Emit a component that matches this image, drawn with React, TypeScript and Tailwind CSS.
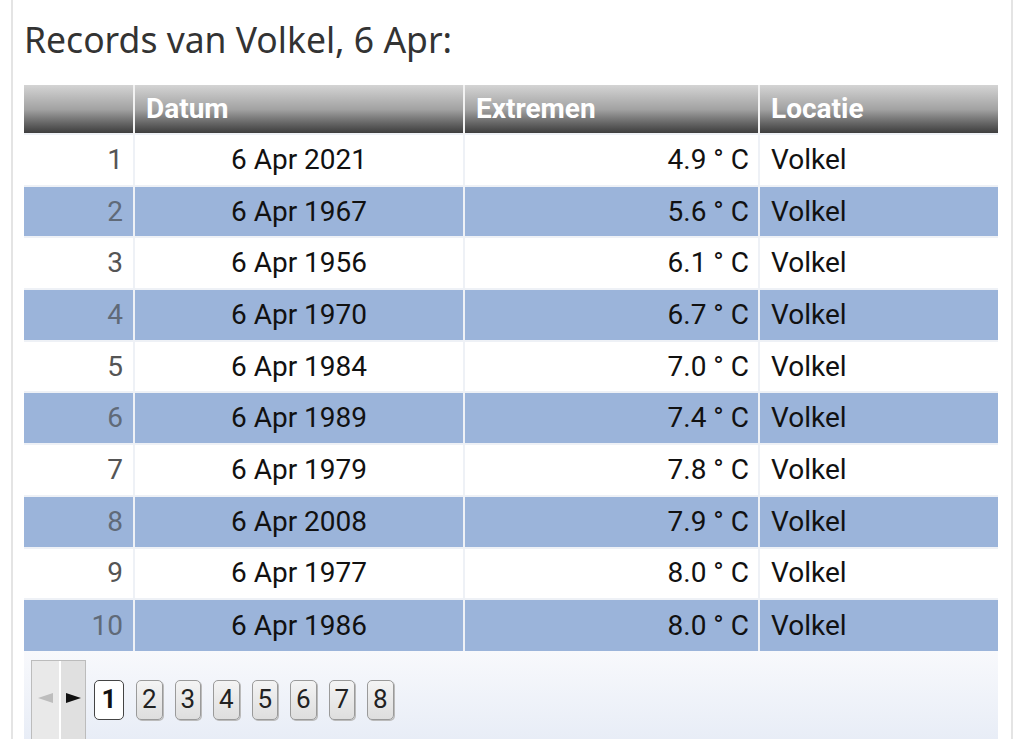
const rows = [
  ['6 Apr 2021', '4.9'],
  ['6 Apr 1967', '5.6'],
  ['6 Apr 1956', '6.1'],
  ['6 Apr 1970', '6.7'],
  ['6 Apr 1984', '7.0'],
  ['6 Apr 1989', '7.4'],
  ['6 Apr 1979', '7.8'],
  ['6 Apr 2008', '7.9'],
  ['6 Apr 1977', '8.0'],
  ['6 Apr 1986', '8.0'],
]

export default function App() {
  return (
    <div className="h-[739px] overflow-hidden bg-white">
      <div className="mx-[11px] h-full border-x-2 border-[#e4e4e4] pl-[11px] pr-[13px]">
        {/* titel */}
        <h1 className="pt-[14px] pb-[21px] font-['Noto_Sans','Open_Sans',sans-serif] text-[35.5px] leading-[50px] text-[#333]">
          Records van Volkel, 6 Apr:
        </h1>

        <table className="w-full table-fixed border-collapse font-['Roboto',sans-serif] text-[28px]">
          <colgroup>
            <col className="w-[110px]" />
            <col className="w-[330px]" />
            <col className="w-[295px]" />
            <col />
          </colgroup>
          <thead>
            <tr className="h-[49px] bg-linear-to-b from-[#d4d4d4] via-[#a2a2a2] to-[#3a3a3a] text-left font-bold text-white">
              <th className="border-r-2 border-[#f2f2f2]"></th>
              <th className="border-r-2 border-[#f2f2f2] pl-[11px] font-bold">Datum</th>
              <th className="border-r-2 border-[#f2f2f2] pl-[11px] font-bold">Extremen</th>
              <th className="pl-[11px] font-bold">Locatie</th>
            </tr>
          </thead>
          <tbody>
            {rows.map(([date, val], i) => {
              const blue = i % 2 === 1
              return (
                <tr
                  key={i}
                  className={`h-[51.7px] border-t-2 border-[#eef1f6] ${blue ? 'bg-[#9bb4da]' : 'bg-white'}`}
                >
                  <td className={`border-r-2 border-[#eef1f6] pr-[10px] text-right ${blue ? 'text-[#606a78]' : 'text-[#555]'}`}>
                    {i + 1}
                  </td>
                  <td className="border-r-2 border-[#eef1f6] text-center text-[#111]">{date}</td>
                  <td className="border-r-2 border-[#eef1f6] pr-[9px] text-right text-[#111]">{val} ° C</td>
                  <td className="pl-[11px] text-[#111]">Volkel</td>
                </tr>
              )
            })}
          </tbody>
        </table>

        {/* paginering */}
        <div className="flex h-[110px] items-start bg-linear-to-b from-[#f8f9fc] to-[#e4eaf5] pt-[9px] pl-[7px] font-['Roboto',sans-serif]">
          <div className="flex h-[95px] w-[55px] border border-[#bcbcbc]">
            <div className="flex w-[27px] items-start justify-center bg-[#e9e9e9] pt-[32px]">
              <svg width="15" height="10" viewBox="0 0 15 10">
                <path d="M0 5 L15 0 L15 10 Z" fill="#bdbdbd" />
              </svg>
            </div>
            <div className="flex flex-1 items-start justify-center border-l-2 border-white bg-[#e0e0e0] pt-[32px]">
              <svg width="15" height="10" viewBox="0 0 15 10">
                <path d="M15 5 L0 0 L0 10 Z" fill="#111" />
              </svg>
            </div>
          </div>
          <div className="mt-[20px] ml-[8px] flex gap-[12px]">
            <div className="flex h-[40px] w-[30px] items-center justify-center rounded-[5px] border border-[#444] bg-white text-[26px] font-bold text-[#111]">
              1
            </div>
            {[2, 3, 4, 5, 6, 7, 8].map((n) => (
              <div
                key={n}
                className="flex h-[40px] w-[26.5px] items-center justify-center rounded-[5px] border border-[#9a9a9a] bg-linear-to-b from-[#f4f4f4] to-[#dedede] text-[26px] text-[#222] shadow-[1px_1px_0_#bbb]"
              >
                {n}
              </div>
            ))}
          </div>
        </div>
      </div>
    </div>
  )
}
